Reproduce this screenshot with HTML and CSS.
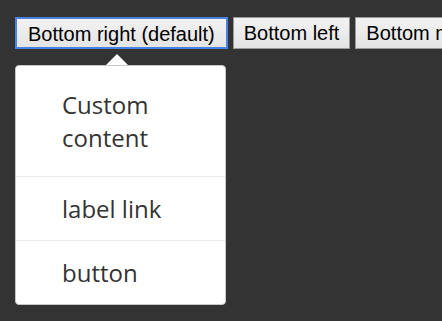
FILE: index.html
```html
<!DOCTYPE html>
<html>
<head>
<meta charset="utf-8">
<link rel="stylesheet" href="styles.css">
</head>
<body>
<div class="bar">
  <button class="btn focused">Bottom right (default)</button>
  <button class="btn">Bottom left</button>
  <button class="btn">Bottom middle</button>
</div>
<div class="popup">
  <div class="arrow"></div>
  <div class="item first">Custom<br>content</div>
  <div class="item">label link</div>
  <div class="item">button</div>
</div>
</body>
</html>
```
FILE: styles.css
```css
html, body {
  margin: 0;
  padding: 0;
  background: #333333;
  overflow: hidden;
}
body {
  padding: 17px 0 0 15px;
  width: 442px;
  height: 321px;
  box-sizing: border-box;
}
.bar {
  display: flex;
  gap: 5px;
  white-space: nowrap;
}
.btn {
  flex: none;
  height: 32px;
  margin: 0;
  padding: 0 10px;
  box-sizing: border-box;
  font-family: "Liberation Sans", Arial, sans-serif;
  font-size: 20px;
  color: #000;
  background: linear-gradient(#f2f2f2, #e4e4e4);
  border: 1px solid #9a9a9a;
  border-radius: 0;
  line-height: 30px;
}
.btn.focused {
  border: 2px solid #4a82e0;
  padding: 0 11px;
}
.popup {
  position: relative;
  margin-top: 16px;
  width: 211px;
  box-sizing: border-box;
  background: #fff;
  border: 1px solid #c8c8c8;
  border-radius: 4px;
  font-family: "Open Sans", sans-serif;
  font-size: 24px;
  line-height: 33px;
  color: #333;
}
.arrow {
  position: absolute;
  top: -12px;
  left: 90px;
  width: 0;
  height: 0;
  border-left: 11px solid transparent;
  border-right: 11px solid transparent;
  border-bottom: 11px solid #fff;
}
.item {
  padding: 15px 0 15px 46px;
  border-top: 1px solid #ececec;
}
.item.first {
  border-top: none;
  padding: 22px 0 22px 46px;
}
```
